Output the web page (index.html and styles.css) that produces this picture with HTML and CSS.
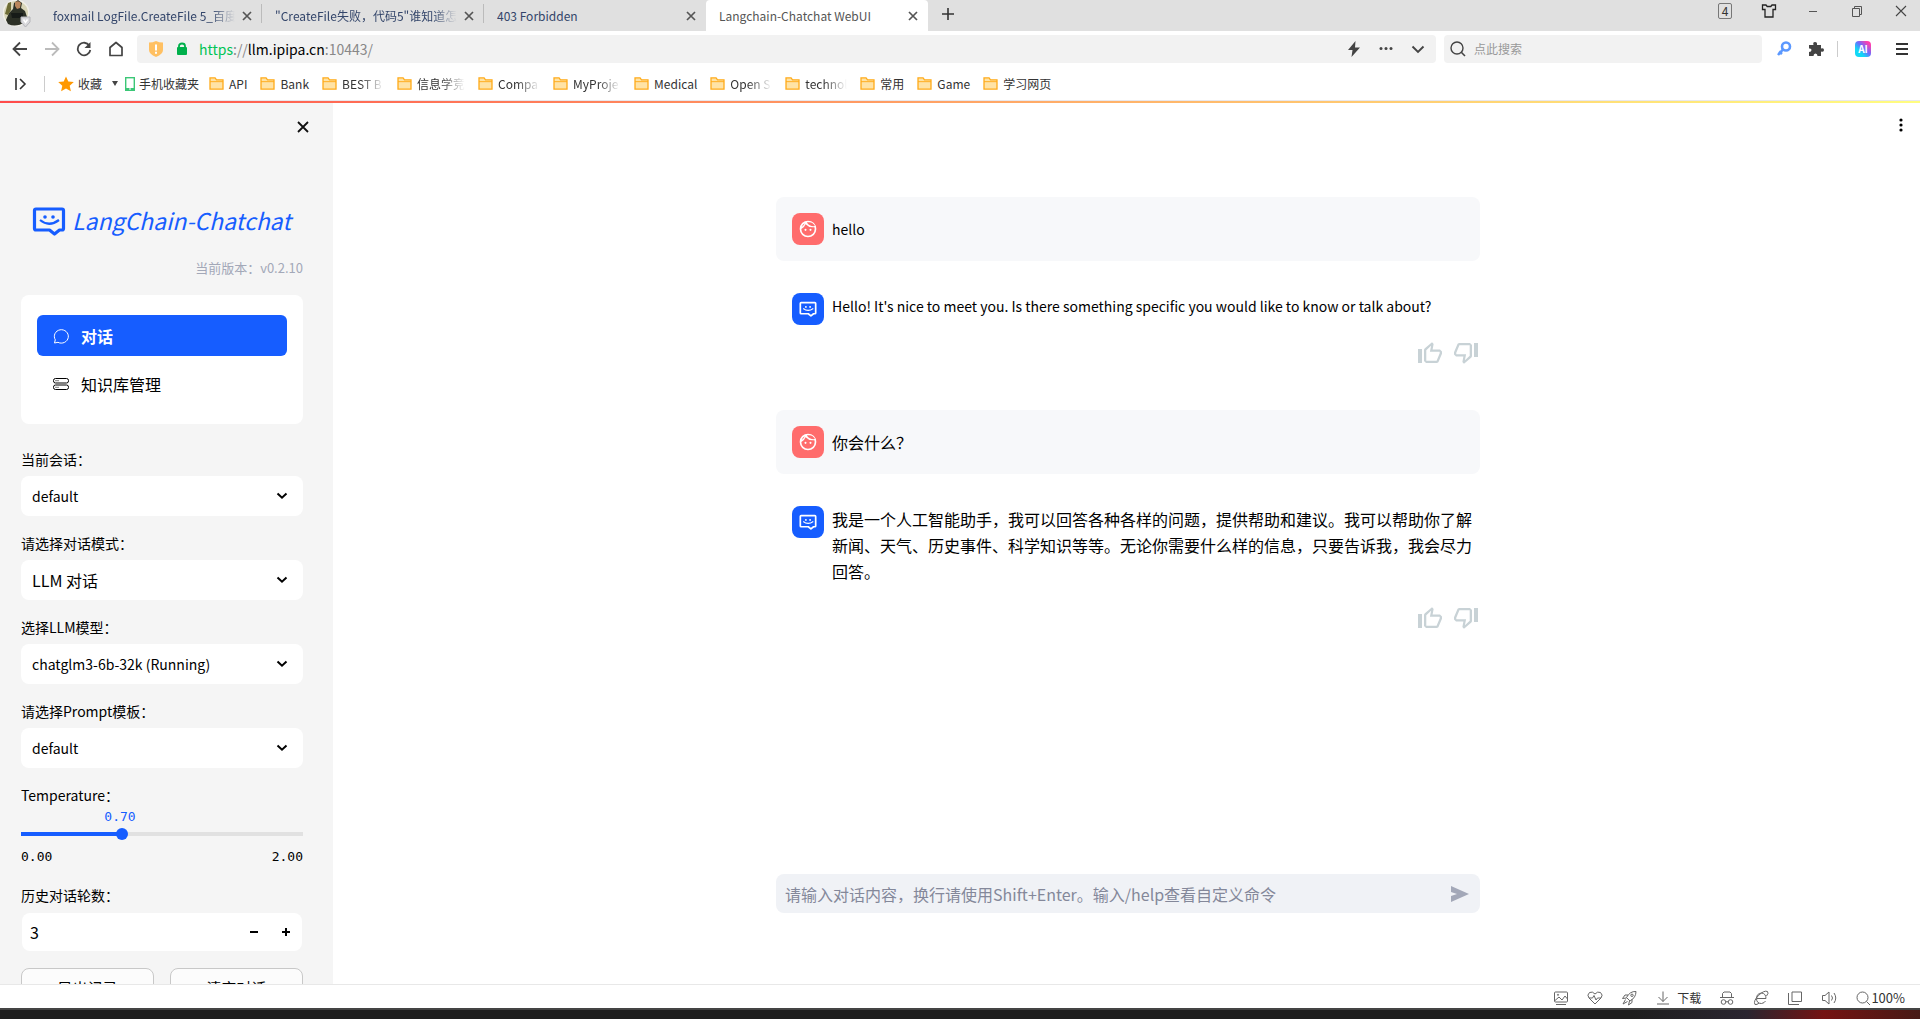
FILE: index.html
```
<!DOCTYPE html>
<html lang="zh-CN">
<head>
<meta charset="utf-8">
<title>Langchain-Chatchat WebUI</title>
<link rel="stylesheet" href="styles.css">
</head>
<body>
<svg class="sprite" aria-hidden="true">
  <symbol id="folder" viewBox="0 0 16 14"><path d="M1 1h5.500l1.500 2h7v10H1z" fill="#ffe3a6" stroke="#ffab1a" stroke-width="1.400"/><path d="M1 5h14" stroke="#ffab1a"/></symbol>
  <symbol id="close" viewBox="0 0 10 10"><path d="M1 1l8 8M9 1L1 9" fill="none" stroke="currentColor" stroke-width="1.700"/></symbol>
  <symbol id="chevron" viewBox="0 0 12 8"><path d="M1.500 1.500L6 5.700l4.500-4.200" fill="none" stroke="currentColor" stroke-width="2"/></symbol>
  <symbol id="user" viewBox="0 0 24 24"><path fill="currentColor" d="M10.250 13a1.250 1.250 0 1 1-2.500 0 1.250 1.250 0 0 1 2.500 0zM15 11.750a1.250 1.250 0 1 0 0 2.500 1.250 1.250 0 0 0 0-2.500zM22 12a10 10 0 1 1-20 0 10 10 0 0 1 20 0zM10.660 4.120A9.900 9.900 0 0 0 19 8.620c.46 0 .910-.04 1.340-.110A8 8 0 0 0 12 4c-.460 0-.91.040-1.340.120zM4.420 9.470a8 8 0 0 0 3.660-4.440 8 8 0 0 0-3.660 4.440zM20 12c0-.780-.120-1.530-.33-2.240A11.900 11.900 0 0 1 9.080 6.230a10 10 0 0 1-5.060 5.620L4 12a8 8 0 0 0 16 0z"/></symbol>
  <symbol id="bot" viewBox="0 0 34 30"><path d="M4 3h26a1.500 1.500 0 0 1 1.500 1.500v18a1.500 1.500 0 0 1-1.500 1.500h-2.500l-5 4-5-4H4a1.500 1.500 0 0 1-1.500-1.500v-18A1.500 1.500 0 0 1 4 3z" fill="none" stroke="currentColor" stroke-width="3.200" stroke-linejoin="round"/><path d="M8 14q9 7.500 19 0" fill="none" stroke="currentColor" stroke-width="2.200"/><circle cx="13" cy="11" r="1.800" fill="currentColor"/><circle cx="21" cy="11" r="1.800" fill="currentColor"/></symbol>
  <symbol id="thumb" viewBox="0 0 24 24"><path fill="currentColor" d="M0 8h4v14H0zM14 1.200l1.300 1.200.3.900-1 5.200H22l2 2v2.200l-3.600 8.500-1.400.8H8l-2-2V8.800l.6-1.400zM8.300 9.300v10.500h10.300l3.100-7.600v-1.500h-9.800l1.200-6z"/></symbol>
</svg>

<header class="browser">
  <div class="tabbar">
    <svg class="avatar" viewBox="0 0 28 28"><circle cx="13" cy="13" r="13.500" fill="#f1efe8"/><circle cx="13" cy="13" r="12" fill="#d8d5b8"/><path d="M3 20L6 13l4-4 1-6 4-3 4 3-1 5 4 3 2 6-2 5q-9 6-17 2z" fill="#2c3026"/><path d="M12 2q4-2 6 1l-1 5-3 1-2-3z" fill="#b9855b"/><path d="M5 3l3-1v8l-3 5-3-1z" fill="#6d6b35"/><path d="M8 13h12v5H9z" fill="#171b18"/><path d="M18 17h9v5l-4.500 5-4.500-5z" fill="#d9d9dc" stroke="#b4b4b8"/><path d="M20.500 19.500l2 3 2-3" stroke="#fff" stroke-width="1.500" fill="none"/></svg>
    <nav class="tabs" aria-label="标签页">
      <div class="tab"><span class="tab-title fade">foxmail LogFile.CreateFile 5_百度</span><button class="tab-close" aria-label="关闭"><svg><use href="#close"/></svg></button></div>
      <div class="tab"><span class="tab-title fade">"CreateFile失败，代码5"谁知道怎</span><button class="tab-close" aria-label="关闭"><svg><use href="#close"/></svg></button></div>
      <div class="tab last"><span class="tab-title">403 Forbidden</span><button class="tab-close" aria-label="关闭"><svg><use href="#close"/></svg></button></div>
      <div class="tab active"><span class="tab-title">Langchain-Chatchat WebUI</span><button class="tab-close" aria-label="关闭"><svg><use href="#close"/></svg></button></div>
      <button class="new-tab" aria-label="新标签页"><svg viewBox="0 0 12 12"><path d="M6 0v12M0 6h12" stroke="#333" stroke-width="1.600"/></svg></button>
    </nav>
    <div class="window-buttons">
      <button aria-label="标签数"><span class="tab-count">4</span></button>
      <button aria-label="皮肤"><svg viewBox="0 0 16 16"><path d="M1.500 2h3.500l1.200 1.500h3.600L11 2h3.500v4.500H12v7.500H4V6.500H1.500z" fill="none" stroke="#222" stroke-width="1.300"/></svg></button>
      <button aria-label="最小化"><svg viewBox="0 0 16 16"><path d="M4 8.500h8" stroke="#555"/></svg></button>
      <button aria-label="还原"><svg viewBox="0 0 16 16"><path d="M3.500 5.500h7v8h-7zM5.500 5V3.500h7v8H11" fill="none" stroke="#555"/></svg></button>
      <button aria-label="关闭窗口"><svg viewBox="0 0 16 16"><path d="M3 3l10 10M13 3L3 13" stroke="#444" stroke-width="1.100"/></svg></button>
    </div>
  </div>

  <div class="toolbar">
    <div class="nav-buttons">
      <button aria-label="后退"><svg viewBox="0 0 16 16"><path d="M15 8H2M8 1.500L1.500 8 8 14.500" fill="none" stroke="#444" stroke-width="1.800"/></svg></button>
      <button aria-label="前进"><svg viewBox="0 0 16 16"><path d="M1 8h13M8 1.500L14.500 8 8 14.500" fill="none" stroke="#bbb" stroke-width="1.800"/></svg></button>
      <button aria-label="刷新"><svg viewBox="0 0 16 16"><path d="M13.300 4.500A6.300 6.300 0 1 0 14.300 9" fill="none" stroke="#444" stroke-width="1.800"/><path d="M14.500 1v6h-6z" fill="#444"/></svg></button>
      <button aria-label="主页"><svg viewBox="0 0 16 16"><path d="M2 6.500L8 1.500l6 5v8H2z" fill="none" stroke="#444" stroke-width="1.700" stroke-linejoin="round"/></svg></button>
    </div>
    <div class="address">
      <svg class="shield" viewBox="0 0 14 16"><path d="M0 1.500Q4 1.500 7 0q3 1.500 7 1.500V9q0 4-7 7-7-3-7-7z" fill="#ffc062"/><path d="M7 3.500v6M7 10.800v2" stroke="#fff" stroke-width="2"/></svg>
      <svg class="lock" viewBox="0 0 12 14"><path d="M3 7V4q0-2.500 3-2.500T9 4v3" fill="none" stroke="#00b04c" stroke-width="1.800"/><rect x="1" y="5" width="10" height="8" rx="1" fill="#00b04c"/></svg>
      <p class="url"><span class="scheme">https</span><span class="dim">://</span>llm.ipipa.cn<span class="dim">:10443/</span></p>
      <div class="address-actions">
        <button aria-label="极速模式"><svg viewBox="0 0 16 16"><path d="M9.500 0L2 9h4.500L5.500 16 14 6.500H9z" fill="#444"/></svg></button>
        <button aria-label="更多"><svg viewBox="0 0 16 16"><circle cx="3" cy="7.500" r="1.500" fill="#444"/><circle cx="8" cy="7.500" r="1.500" fill="#444"/><circle cx="13" cy="7.500" r="1.500" fill="#444"/></svg></button>
        <button aria-label="展开"><svg viewBox="0 0 16 16"><path d="M2.500 5.500L8 11l5.500-5.500" fill="none" stroke="#444" stroke-width="1.900"/></svg></button>
      </div>
    </div>
    <label class="search">
      <svg viewBox="0 0 16 16"><circle cx="7" cy="7" r="6" fill="none" stroke="#444" stroke-width="1.400"/><path d="M11.300 11.300l3.700 3.700" stroke="#444" stroke-width="1.600"/></svg>
      <input type="text" placeholder="点此搜索" aria-label="搜索">
    </label>
    <div class="extras">
      <button aria-label="密码"><svg viewBox="0 0 16 16"><circle cx="10" cy="5.500" r="4" fill="none" stroke="#5b98ff" stroke-width="2.600"/><path d="M7 8.500L2 14M3 10.500l3 2.500" stroke="#5b98ff" stroke-width="2.600"/></svg></button>
      <button aria-label="扩展"><svg viewBox="0 0 16 16"><path d="M1 4h4.500Q4.500 1 7 1t2 3H13v3.500q3-1 3 1.500t-3 1.500V15H9.500q0-2.500-2-2.500T5.500 15H1v-4q2.500 0 2.500-2T1 7.500z" fill="#444"/></svg></button>
      <span class="divider"></span>
      <button class="ai" aria-label="AI 助手">AI</button>
      <button aria-label="菜单"><svg viewBox="0 0 16 16"><path d="M2 3h12M2 8h12M2 13h12" stroke="#333" stroke-width="1.800"/></svg></button>
    </div>
  </div>

  <nav class="bookmarks" aria-label="收藏栏">
    <button class="expand" aria-label="展开侧栏"><svg viewBox="0 0 12 12"><path d="M1 0v12M5 1l5 5-5 5" fill="none" stroke="#333" stroke-width="1.600"/></svg></button>
    <span class="divider"></span>
    <a href="#" class="fav"><svg viewBox="0 0 16 16"><path d="M8 .5l2.300 5 5.500.6-4.100 3.700 1.200 5.500L8 12.500l-4.900 2.800 1.200-5.500L.2 6.100l5.500-.6z" fill="#ff9800"/></svg><span>收藏</span><svg class="caret" viewBox="0 0 6 5"><path d="M0 0h6L3 5z" fill="#444"/></svg></a>
    <a href="#" class="phone"><svg viewBox="0 0 10 14"><rect x=".7" y=".7" width="8.600" height="12.600" fill="#fff" stroke="#3cc777" stroke-width="1.400"/><path d="M1 11h8v2H1z" fill="#3cc777"/><path d="M4 12h2" stroke="#fff"/></svg><span>手机收藏夹</span></a>
    <a href="#"><svg><use href="#folder"/></svg><span>API</span></a>
    <a href="#"><svg><use href="#folder"/></svg><span>Bank</span></a>
    <a href="#"><svg><use href="#folder"/></svg><span class="fade short">BEST B</span></a>
    <a href="#"><svg><use href="#folder"/></svg><span class="fade">信息学竞</span></a>
    <a href="#"><svg><use href="#folder"/></svg><span class="fade short">Compa</span></a>
    <a href="#"><svg><use href="#folder"/></svg><span class="fade">MyProje</span></a>
    <a href="#"><svg><use href="#folder"/></svg><span>Medical</span></a>
    <a href="#"><svg><use href="#folder"/></svg><span class="fade short">Open S</span></a>
    <a href="#"><svg><use href="#folder"/></svg><span class="fade short">technol</span></a>
    <a href="#"><svg><use href="#folder"/></svg><span>常用</span></a>
    <a href="#"><svg><use href="#folder"/></svg><span>Game</span></a>
    <a href="#"><svg><use href="#folder"/></svg><span>学习网页</span></a>
  </nav>
</header>

<div class="page">
  <div class="decoration"></div>
  <div class="app">
    <aside class="sidebar">
      <button class="sidebar-close" aria-label="收起侧栏"><svg viewBox="0 0 12 12"><path d="M1 1l10 10M11 1L1 11" stroke="#111" stroke-width="1.800"/></svg></button>
      <div class="logo"><svg><use href="#bot"/></svg><span>LangChain-Chatchat</span></div>
      <p class="version">当前版本：v0.2.10</p>
      <nav class="menu">
        <a href="#" class="selected"><svg viewBox="0 0 16 16"><path d="M1.500 15l.8-3.200A7 6.700 0 1 1 5 14.300z" fill="none" stroke="currentColor"/></svg>对话</a>
        <a href="#"><svg viewBox="0 0 16 16"><rect x=".5" y="2.500" width="15" height="4.500" rx="2" fill="none" stroke="currentColor"/><rect x=".5" y="9" width="15" height="4.500" rx="2" fill="none" stroke="currentColor"/><path d="M2.500 4.700h1M4.500 4.700h1M2.500 11.300h1M4.500 11.300h1" stroke="currentColor"/></svg>知识库管理</a>
      </nav>
      <div class="field"><label for="session">当前会话：</label><div class="select"><select id="session"><option>default</option></select><svg><use href="#chevron"/></svg></div></div>
      <div class="field"><label for="mode">请选择对话模式：</label><div class="select"><select id="mode" class="han"><option>LLM 对话</option></select><svg><use href="#chevron"/></svg></div></div>
      <div class="field"><label for="model">选择LLM模型：</label><div class="select"><select id="model"><option>chatglm3-6b-32k (Running)</option></select><svg><use href="#chevron"/></svg></div></div>
      <div class="field"><label for="prompt">请选择Prompt模板：</label><div class="select"><select id="prompt"><option>default</option></select><svg><use href="#chevron"/></svg></div></div>
      <div class="field slider">
        <label for="temp">Temperature：</label>
        <output for="temp">0.70</output>
        <input id="temp" type="range" min="0" max="2" step="0.01" value="0.7">
        <div class="ticks"><span>0.00</span><span>2.00</span></div>
      </div>
      <div class="field"><label for="rounds">历史对话轮数：</label>
        <div class="number"><input id="rounds" type="text" inputmode="numeric" value="3"><button aria-label="减少"><svg viewBox="0 0 10 10"><path d="M1 5h8" stroke="#000" stroke-width="2"/></svg></button><button aria-label="增加"><svg viewBox="0 0 10 10"><path d="M1 5h8M5 1v8" stroke="#000" stroke-width="2"/></svg></button></div>
      </div>
      <div class="actions"><button>导出记录</button><button>清空对话</button></div>
    </aside>

    <main class="main">
      <button class="kebab" aria-label="菜单"><svg viewBox="0 0 4 16"><circle cx="2" cy="3" r="1.600"/><circle cx="2" cy="8" r="1.600"/><circle cx="2" cy="13" r="1.600"/></svg></button>
      <div class="chat">
        <article class="message from-user"><span class="face"><svg><use href="#user"/></svg></span><p lang="en">hello</p></article>
        <article class="message"><span class="face bot"><svg><use href="#bot"/></svg></span><p lang="en">Hello! It's nice to meet you. Is there something specific you would like to know or talk about?</p></article>
        <div class="feedback"><button aria-label="赞"><svg><use href="#thumb"/></svg></button><button class="down" aria-label="踩"><svg><use href="#thumb"/></svg></button></div>
        <article class="message from-user"><span class="face"><svg><use href="#user"/></svg></span><p>你会什么？</p></article>
        <article class="message"><span class="face bot"><svg><use href="#bot"/></svg></span><p>我是一个人工智能助手，我可以回答各种各样的问题，提供帮助和建议。我可以帮助你了解新闻、天气、历史事件、科学知识等等。无论你需要什么样的信息，只要告诉我，我会尽力回答。</p></article>
        <div class="feedback"><button aria-label="赞"><svg><use href="#thumb"/></svg></button><button class="down" aria-label="踩"><svg><use href="#thumb"/></svg></button></div>
      </div>
      <form class="composer">
        <input type="text" aria-label="对话内容" placeholder="请输入对话内容，换行请使用Shift+Enter。输入/help查看自定义命令">
        <button type="button" aria-label="发送"><svg viewBox="0 0 20 16"><path d="M1 0l18 8L1 16v-6l6-2-6-2z" fill="#a3a8b8"/></svg></button>
      </form>
    </main>
  </div>
</div>

<footer class="statusbar">
  <button aria-label="图片"><svg viewBox="0 0 16 16"><rect x="1.500" y="2" width="13" height="10" rx="1"/><path d="M2 10.500L6 7l3 3 3-4 2.500 3M3 14.500h10"/><circle cx="5" cy="4.800" r=".6"/></svg></button>
  <button aria-label="健康"><svg viewBox="0 0 16 16"><path d="M8 14L2 8Q-.5 5 2.500 2.500 5.500 1 8 4q2.500-3 5.500-1.500Q16.500 5 14 8z"/><path d="M2 8h3.500L7 5.500 9 10l1.500-2H14"/></svg></button>
  <button aria-label="加速"><svg viewBox="0 0 16 16"><path d="M15 1.500Q9 1 5.500 7.500L9 11Q15 7.500 15 1.500zM7 5H4L1.500 8.500l4-.5M11 9v3.500L7.500 15 8.500 11M4.500 9.500L2 14l4.500-2.500"/><circle cx="11" cy="5.300" r="1.200"/></svg></button>
  <button aria-label="下载"><svg viewBox="0 0 16 16"><path d="M8 1.500v10M3.500 7L8 11.500 12.500 7M2 14h12"/></svg><span>下载</span></button>
  <button aria-label="无痕"><svg viewBox="0 0 16 16"><path d="M3.500 7V3.500L5 2h6l1.500 1.500V7M1 7.500h14M7 12q1-1 2 0"/><circle cx="4.500" cy="12" r="2.300"/><circle cx="11.500" cy="12" r="2.300"/></svg></button>
  <button aria-label="兼容模式"><svg viewBox="0 0 16 16"><path d="M4 8.500h9q0-5-4.500-5.500-5 .5-5 5.500t5 5Q11.500 13 12.500 11M2 14.500Q0 11 5.500 5.500T14.500 1.500Q16 3 13.500 6M2 14.500q2 .5 4-1.500"/></svg></button>
  <button aria-label="分屏"><svg viewBox="0 0 16 16"><path d="M1.500 3v11.500H12M5 2h9.500v9.500H5z"/></svg></button>
  <button aria-label="声音"><svg viewBox="0 0 16 16"><path d="M1.500 5.500H4L8 2v12l-4-3.500H1.500zM10.500 5.500q2 2.500 0 5M13 3q3.500 5 0 10"/></svg></button>
  <button class="zoom" aria-label="缩放"><svg viewBox="0 0 16 16"><circle cx="7.500" cy="7.500" r="5.500"/><path d="M11.500 11.500L15 15"/></svg><span>100%</span></button>
</footer>
<div class="desktop-edge"></div>
</body>
</html>
```
FILE: styles.css
```
* { box-sizing: border-box; }

body {
  margin: 0;
  height: 100vh;
  display: flex;
  flex-direction: column;
  overflow: hidden;
  background: #fff;
  color: #000;
  font-family: "Noto Sans CJK SC", "Noto Sans", sans-serif;
  font-size: 16px;
  line-height: 26px;
}

p { margin: 0; }
a { color: inherit; text-decoration: none; }
button {
  display: flex;
  align-items: center;
  justify-content: center;
  margin: 0;
  padding: 0;
  border: 0;
  background: none;
  color: inherit;
  font: inherit;
}
input, select { font: inherit; color: inherit; border: 0; margin: 0; min-width: 0; }
svg { display: block; flex: none; width: 16px; height: 16px; }
.sprite { position: absolute; width: 0; height: 0; }
.divider { width: 1px; height: 16px; background: #ccc; }
.fade { mask-image: linear-gradient(to left, transparent, #000 24px); }

/* Browser chrome */
.browser { flex: none; font-size: 12px; line-height: 20px; color: #333; }

.tabbar {
  display: flex;
  align-items: flex-start;
  height: 31px;
  padding: 0 1px 0 3px;
  background: #e0e0e0;
}
.avatar { width: 28px; height: 28px; margin-right: 9px; }
.tabs { flex: 1; display: flex; min-width: 0; }
.tab {
  flex: 0 1 222px;
  display: flex;
  align-items: center;
  gap: 7px;
  height: 31px;
  min-width: 0;
  padding: 0 10px 0 13px;
  color: #33456a;
  background: linear-gradient(#bbb, #bbb) right 4px / 1px 19px no-repeat;
}
.tab.last { background: none; }
.tab.active { background: #fff; border-radius: 4px 4px 0 0; color: #555; }
.tab-title { flex: 1; overflow: hidden; white-space: nowrap; }
.tab-close { width: 10px; height: 10px; color: #555; }
.tab-close svg { width: 10px; height: 10px; }
.new-tab { width: 40px; height: 28px; }
.new-tab svg { width: 12px; height: 12px; }
.window-buttons { display: flex; gap: 8px; }
.window-buttons button { width: 36px; height: 22px; }
.tab-count {
  width: 14px;
  height: 16px;
  border: 1px solid #777;
  border-radius: 2px;
  line-height: 14px;
}

.toolbar { display: flex; align-items: center; height: 36px; padding: 0 10px; }
.nav-buttons { display: flex; gap: 16px; padding: 0 13px 0 2px; }
.address {
  flex: 1;
  display: flex;
  align-items: center;
  height: 28px;
  padding: 0 10px 0 12px;
  border-radius: 4px;
  background: #f2f2f2;
}
.shield { width: 14px; }
.lock { width: 12px; height: 14px; margin: 0 11px 0 13px; }
.url { flex: 1; font-size: 14px; color: #000; }
.scheme { color: #00c455; }
.dim { color: #888; }
.address-actions { display: flex; gap: 16px; }
.search {
  display: flex;
  align-items: center;
  gap: 8px;
  width: 318px;
  height: 28px;
  margin: 0 14px 0 8px;
  padding: 0 6px;
  border-radius: 4px;
  background: #f2f2f2;
}
.search input { flex: 1; padding: 0; background: none; }
.search input::placeholder { color: #999; }
.extras { display: flex; align-items: center; gap: 16px; }
.extras .divider { margin-right: 1px; margin-left: -3px; }
.ai {
  width: 16px;
  height: 16px;
  margin-right: 7px;
  border-radius: 4px;
  background: linear-gradient(45deg, #12d8f6 30%, #6a6cff 55%, #ff3fae 85%);
  color: #fff;
  font-size: 10px;
  font-weight: 700;
}

.bookmarks { display: flex; align-items: center; height: 33px; padding-left: 15px; gap: 13px; }
.bookmarks a { display: flex; align-items: center; gap: 5px; white-space: nowrap; }
.bookmarks a svg { width: 15px; height: 13px; }
.expand { width: 12px; margin-right: 4px; }
.expand svg { width: 12px; height: 12px; }
.bookmarks .fav { gap: 4px; margin-right: -6px; }
.bookmarks .fav svg { width: 16px; height: 16px; }
.bookmarks .fav .caret { width: 6px; height: 5px; margin-left: 6px; }
.bookmarks .phone { gap: 4px; margin-right: -3px; }
.bookmarks .phone svg { width: 10px; height: 14px; }
.bookmarks .fade { width: 48px; overflow: hidden; }
.bookmarks .short { width: 42px; }

/* Web page */
.page {
  flex: 1;
  min-height: 0;
  display: flex;
  flex-direction: column;
  border-top: 1px solid #e8e8ee;
  border-bottom: 1px solid #e8e8e8;
}
.decoration { flex: none; height: 2px; background: linear-gradient(90deg, #ff4b4b, #fffd80); }
.app { flex: 1; min-height: 0; display: flex; }

.sidebar {
  flex: none;
  display: flex;
  flex-direction: column;
  width: 333px;
  padding: 18px 30px 0 21px;
  overflow: hidden;
  background: #f5f5f5;
  font-size: 14px;
}
.sidebar > * { flex: none; }
.sidebar-close { align-self: flex-end; width: 12px; height: 12px; margin-right: -6px; }
.sidebar-close svg { width: 12px; height: 12px; }
.logo {
  display: flex;
  align-items: center;
  gap: 6px;
  height: 32px;
  margin-top: 72px;
  padding-left: 11px;
  color: #165dff;
  white-space: nowrap;
}
.logo svg { width: 34px; height: 30px; }
.logo span { font-size: 23px; font-style: italic; line-height: 32px; padding-bottom: 2px; }
.version { margin: 18px 0 14px; text-align: right; font-size: 13px; color: #a3a8b8; }
.menu { padding: 20px 16px; border-radius: 8px; background: #fff; margin-bottom: 22px; }
.menu a {
  display: flex;
  align-items: center;
  gap: 12px;
  height: 41px;
  padding-left: 16px;
  border-radius: 6px;
  font-size: 16px;
}
.menu a + a { margin-top: 7px; }
.menu .selected { background: #165dff; color: #fff; font-weight: 700; }

.field { display: flex; flex-direction: column; margin-bottom: 14px; }
.field label { line-height: 26px; margin-bottom: 4px; }
.select { display: grid; align-items: center; border-radius: 8px; background: #fff; }
.select select {
  grid-area: 1 / 1;
  height: 40px;
  padding: 0 32px 0 11px;
  appearance: none;
  background: none;
}
.select .han { font-size: 16px; }
.select svg { grid-area: 1 / 1; justify-self: end; width: 12px; height: 8px; margin-right: 15px; pointer-events: none; }

.slider label { margin-bottom: 1px; }
.slider output, .ticks { font: 13px/16px "DejaVu Sans Mono", monospace; }
.slider output { width: 198px; text-align: center; color: #165dff; }
.slider input {
  appearance: none;
  width: 100%;
  height: 12px;
  margin: 3px 0 6px;
  background: linear-gradient(90deg, #165dff 35%, #e1e1e1 35%) center / 100% 4px no-repeat;
}
.slider input::-webkit-slider-thumb { appearance: none; width: 12px; height: 12px; border-radius: 50%; background: #165dff; }
.ticks { display: flex; justify-content: space-between; padding: 3px 0; }

.number { display: flex; height: 38px; margin: 1px 1px 3px; border-radius: 8px; background: #fff; }
.number input { flex: 1; padding: 0 8px; background: none; font-size: 16px; }
.number button { width: 32px; }
.number svg { width: 10px; height: 10px; }
.actions { display: grid; grid-template-columns: 1fr 1fr; gap: 16px; }
.actions button { height: 40px; border: 1px solid #c8c8c8; border-radius: 8px; background: #fcfcfc; font-size: 15px; }

.main { flex: 1; min-width: 0; display: flex; flex-direction: column; padding-left: 3px; }
.kebab { align-self: flex-end; width: 16px; height: 16px; margin: 14px 11px 0 0; }
.kebab svg { width: 4px; }
.chat, .composer { width: 100%; max-width: 704px; margin: 0 auto; }
.chat { flex: 1; min-height: 0; padding-top: 64px; }
.message { display: flex; gap: 8px; padding: 16px 8px 16px 16px; border-radius: 8px; }
.message + .message { margin-top: 16px; }
.message p { flex: 1; min-width: 0; padding-bottom: 6px; }
.message p:lang(en) { font-size: 14px; }
.from-user { background: #f7f8fa; }
.message.from-user p { padding: 3px 0; }
.face {
  flex: none;
  display: flex;
  align-items: center;
  justify-content: center;
  width: 32px;
  height: 32px;
  border-radius: 8px;
  background: #ff6c6c;
  color: #fff;
}
.face svg { width: 20px; height: 20px; }
.bot { background: #165dff; }
.bot svg { width: 18px; height: 18px; }
.feedback { display: flex; justify-content: flex-end; gap: 12px; padding: 0 2px 45px; color: #c8d2d6; }
.feedback button { width: 24px; height: 24px; }
.feedback svg { width: 24px; height: 24px; }
.down { transform: rotate(180deg); }

.composer {
  display: flex;
  height: 39px;
  margin-bottom: 71px;
  border-radius: 8px;
  background: #f0f2f6;
}
.composer input { flex: 1; padding: 0 9px; background: none; }
.composer input::placeholder { color: #84889a; }
.composer button { width: 40px; }
.composer svg { width: 20px; }

/* Browser status bar */
.statusbar {
  flex: none;
  display: flex;
  align-items: center;
  justify-content: flex-end;
  gap: 18px;
  height: 23px;
  padding: 2px 15px 0 0;
  font-size: 12px;
  line-height: 18px;
  color: #333;
}
.statusbar button { gap: 6px; }
.statusbar .zoom { gap: 0; font-size: 13px; }
.statusbar svg { fill: none; stroke: #666; }
.desktop-edge {
  flex: none;
  height: 11px;
  border-top: 2px solid #444;
  background: linear-gradient(90deg, #1e1e1e 0 85%, #2a2530 91%, #751312 95%, #471a15);
}
```
